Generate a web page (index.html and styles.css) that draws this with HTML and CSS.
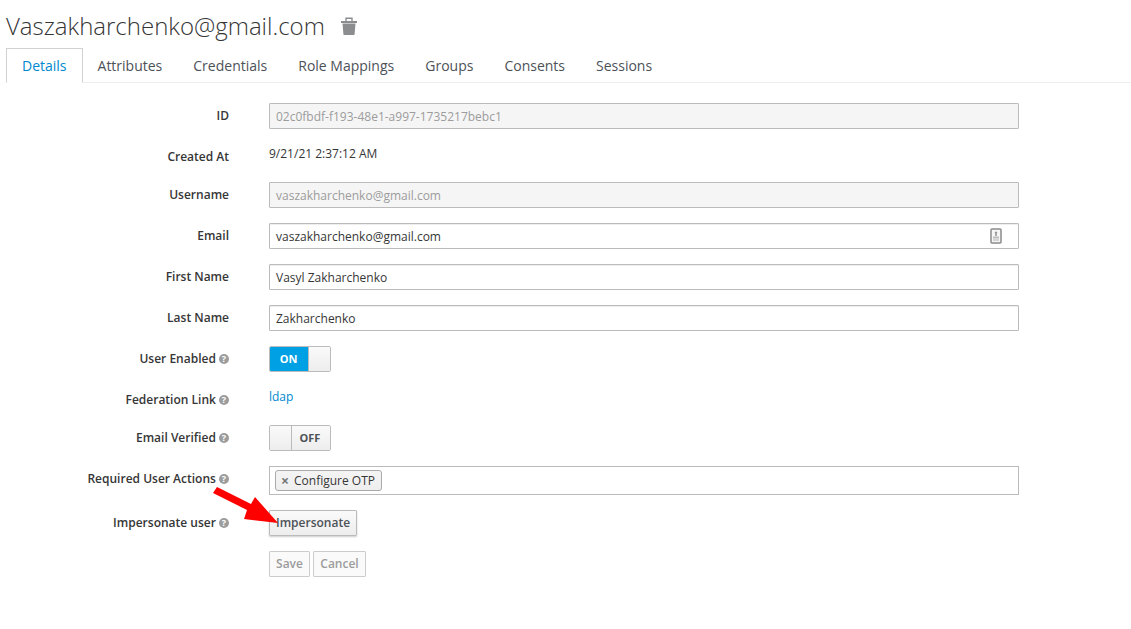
FILE: index.html
```html
<!DOCTYPE html>
<html lang="en">
<head>
<meta charset="utf-8">
<title>User details</title>
<link rel="stylesheet" href="styles.css">
</head>
<body>
<div class="page">
  <h1 class="title">
    <span>Vaszakharchenko@gmail.com</span>
    <svg class="trash" viewBox="0 0 16 18" width="16" height="18" aria-hidden="true"><path fill="none" stroke="#8b8d8f" stroke-width="1.400" d="M5 4V1.200h6V4"/><path fill="#8b8d8f" d="M0 4h16v2H0zM1.500 6.500h13L13.600 17c0 .6-.4 1-1 1H3.400c-.6 0-1-.4-1-1z"/></svg>
  </h1>
  <nav class="tabs">
    <a class="tab active">Details</a>
    <a class="tab">Attributes</a>
    <a class="tab">Credentials</a>
    <a class="tab">Role Mappings</a>
    <a class="tab">Groups</a>
    <a class="tab">Consents</a>
    <a class="tab">Sessions</a>
  </nav>
  <form class="form">
    <div class="row"><label class="label">ID</label><div class="input disabled">02c0fbdf-f193-48e1-a997-1735217bebc1</div></div>
    <div class="row static"><label class="label">Created At</label><div class="value">9/21/21 2:37:12 AM</div></div>
    <div class="row"><label class="label">Username</label><div class="input disabled">vaszakharchenko@gmail.com</div></div>
    <div class="row"><label class="label">Email</label><div class="input with-icon"><span class="nudge">vaszakharchenko@gmail.com</span>
      <svg class="key" viewBox="0 0 12 16" width="12" height="16" aria-hidden="true"><rect x="1" y="1" width="10" height="14" rx="1" fill="#f6f6f6" stroke="#8a8a8a" stroke-width="1.500"/><path fill="#999" d="M6 3.500a1.300 1.300 0 0 1 .8 2.300V8H5.200V5.800A1.300 1.300 0 0 1 6 3.500z"/><rect x="3" y="8.500" width="6" height="2" fill="#bbb"/><rect x="3" y="11" width="6" height="2" fill="#d4d4d4"/></svg></div></div>
    <div class="row"><label class="label">First Name</label><div class="input">Vasyl Zakharchenko</div></div>
    <div class="row"><label class="label">Last Name</label><div class="input">Zakharchenko</div></div>
    <div class="row"><label class="label">User Enabled <i class="help">?</i></label>
      <div class="switch"><span class="switch-on">ON</span><span class="switch-knob wide"></span></div></div>
    <div class="row static"><label class="label">Federation Link <i class="help">?</i></label><div class="value"><a class="link">ldap</a></div></div>
    <div class="row"><label class="label">Email Verified <i class="help">?</i></label>
      <div class="switch"><span class="switch-knob"></span><span class="switch-off">OFF</span></div></div>
    <div class="row"><label class="label">Required User Actions <i class="help">?</i></label>
      <div class="multi"><span class="chip"><span class="chip-x">×</span>Configure OTP</span></div></div>
    <div class="row"><label class="label">Impersonate user <i class="help">?</i></label><div class="field"><button type="button" class="btn">Impersonate</button></div></div>
    <div class="row"><span></span><div class="actions"><button type="button" class="btn ghost">Save</button><button type="button" class="btn ghost">Cancel</button></div></div>
  </form>
  <svg class="arrow" viewBox="0 0 70 44" width="70" height="44" aria-hidden="true"><path fill="#ff0000" d="M7 3 L41 20 L45 13 L68 39 L34 35 L37 26 L3 9 Z"/></svg>
</div>
</body>
</html>
```
FILE: styles.css
```css
* { box-sizing: border-box; }
html, body { margin: 0; background: #fff; }
body {
  font-family: "Open Sans", "Liberation Sans", sans-serif;
  font-size: 12px;
  color: #363636;
  line-height: 18px;
}
.page { position: relative; height: 629px; overflow: hidden; }
.title {
  display: flex;
  align-items: center;
  gap: 16px;
  margin: 0;
  padding: 3px 0 0 6px;
  height: 48px;
  font-size: 24px;
  font-weight: 300;
  line-height: 30px;
  color: #363636;
}
.tabs {
  display: flex;
  height: 35px;
  margin-left: 6px;
  border-bottom: 1px solid #ededed;
  font-size: 14px;
  line-height: 20px;
}
.tab {
  height: 35px;
  margin-right: -1px;
  padding: 7px 15px 0;
  border: 1px solid transparent;
  border-bottom: 0;
  color: #4d5258;
}
.tab.active {
  background: #fff;
  border-color: #d1d1d1;
  border-bottom: 1px solid #fff;
  color: #0088ce;
}
.form {
  display: flex;
  flex-direction: column;
  gap: 15px;
  margin-top: 20px;
}
.row {
  display: grid;
  grid-template-columns: 229px 750px;
  column-gap: 40px;
  align-items: start;
}
.row.static { min-height: 23px; }
.label {
  padding-top: 4px;
  text-align: right;
  font-weight: 600;
  color: #363636;
  white-space: nowrap;
}
.help {
  display: inline-block;
  width: 10px;
  height: 10px;
  border-radius: 50%;
  background: #9c9c9c;
  color: #fff;
  font-style: normal;
  font-size: 9px;
  font-weight: 700;
  line-height: 10px;
  text-align: center;
  vertical-align: 1px;
}
.input {
  height: 26px;
  padding: 3px 6px;
  border: 1px solid #bbb;
  border-radius: 1px;
  line-height: 20px;
  background: #fff;
  box-shadow: inset 0 1px 1px rgba(3, 3, 3, .075);
}
.input.disabled {
  background: #f5f5f5;
  color: #9c9c9c;
  box-shadow: none;
}
.with-icon { display: flex; justify-content: space-between; align-items: center; padding-right: 16px; }
.nudge { padding-top: 1px; }
.key { display: block; }
.value { padding-top: 1px; line-height: 18px; }
.link { color: #0088ce; }
.switch {
  display: flex;
  width: max-content;
  height: 26px;
  border: 1px solid #bbb;
  border-radius: 2px;
  overflow: hidden;
  font-size: 11px;
  font-weight: 700;
  line-height: 24px;
  text-align: center;
}
.switch-on { width: 38px; padding-right: 1px; background: #00a1e4; color: #fff; }
.switch-off { width: 38px; padding-right: 2px; background: linear-gradient(#fafafa, #ededed); color: #4d5258; }
.switch-knob {
  width: 22px;
  border-right: 1px solid #bbb;
  background: linear-gradient(#fafafa, #ededed);
}
.switch-knob.wide { border-right: 0; border-left: 1px solid #bbb; }
.multi {
  height: 29px;
  padding: 3px 5px;
  border: 1px solid #bbb;
}
.chip {
  display: inline-flex;
  align-items: center;
  height: 21px;
  padding: 0 6px 0 5px;
  border: 1px solid #aaa;
  border-radius: 3px;
  background: linear-gradient(#f4f4f4, #eee);
  color: #363636;
}
.chip-x {
  margin-right: 5px;
  color: #777;
  font-size: 14px;
  font-weight: 700;
  line-height: 18px;
}
.field { display: flex; }
.btn {
  height: 26px;
  padding: 0 6px;
  border: 1px solid #bbb;
  border-radius: 1px;
  background: linear-gradient(#fafafa, #ededed);
  color: #4d5258;
  font: 600 12px/18px "Open Sans", "Liberation Sans", sans-serif;
  box-shadow: 0 1px 2px rgba(3, 3, 3, .2);
}
.actions { display: flex; gap: 3px; }
.btn.ghost {
  min-width: 41px;
  background: #fafafa;
  color: #9c9c9c;
  border-color: #ccc;
  box-shadow: none;
}
.btn.ghost + .btn.ghost { width: 53px; }
.arrow { position: absolute; left: 210px; top: 484px; }
```
